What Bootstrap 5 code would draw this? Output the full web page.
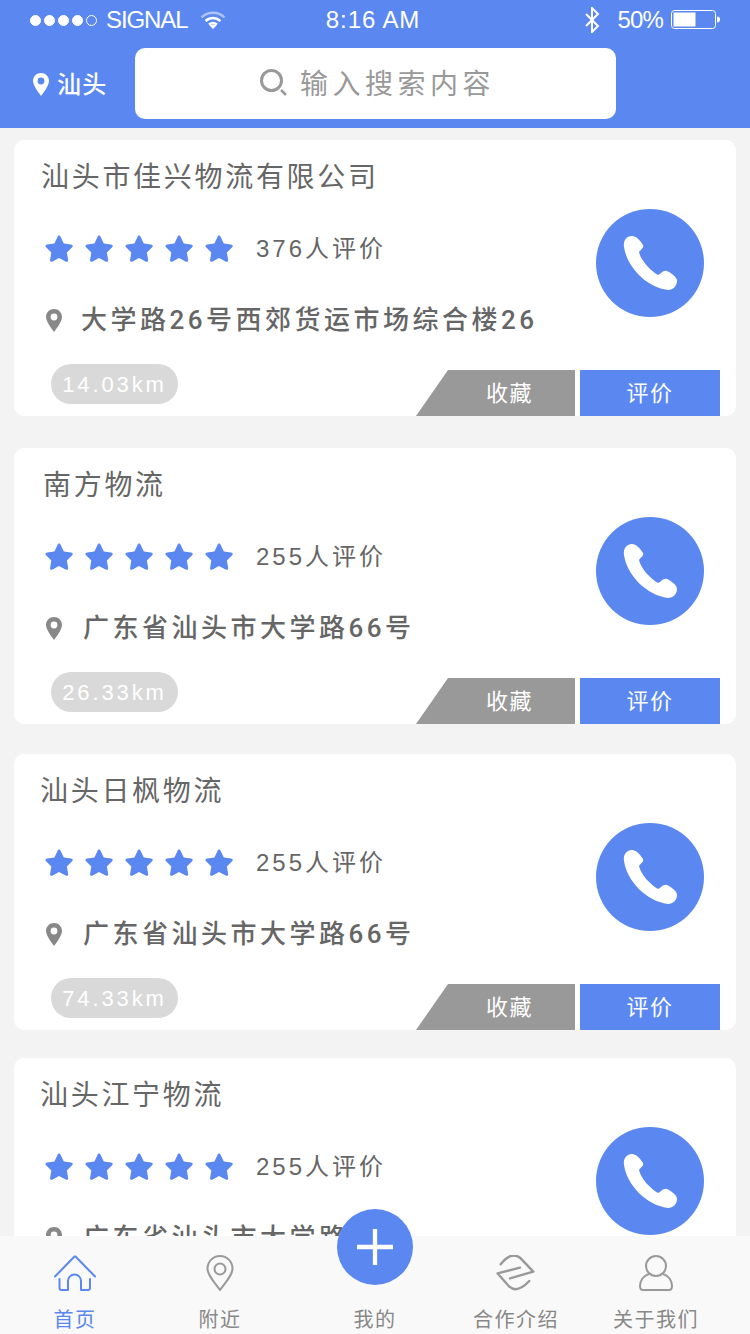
<!DOCTYPE html>
<html lang="zh-CN">

<head>
  <meta charset="UTF-8">
  <title>物流列表</title>
  <meta name="viewport" content="width=device-width, initial-scale=1.0">
  <link href="https://cdn.jsdelivr.net/npm/bootstrap@5.3.0/dist/css/bootstrap.min.css" rel="stylesheet">
  <style>
    body {
      background: #f3f3f3;
      font-family: "Liberation Sans", "Noto Sans CJK SC", sans-serif;
      color: #666;
    }

    .app-screen { width: 750px; height: 1334px; overflow: hidden; position: relative; }

    /* header */
    .top-head { height: 128px; background: #5a88f0; color: #fff; }
    .status-row { height: 40px; padding: 0 30px; font-size: 24px; line-height: 40px; }
    .status-side { flex: 1 1 0; }
    .signal-text { letter-spacing: -1.1px; margin: 0 13px 0 6px; }
    .clock-text { letter-spacing: .9px; margin-right: 4px; }
    .dot-on, .dot-off { width: 11px; height: 11px; border-radius: 50%; border: 1px solid #fff; margin-right: 3px; }
    .dot-on { background: #fff; }
    .bat-text { letter-spacing: -.8px; margin: 0 8px 0 17px; }
    .city-wrap { width: 135px; padding-left: 33px; font-size: 24px; font-weight: 500; letter-spacing: 1.200px; }
    .city-wrap svg { margin-right: 8px; }
    .city-wrap span { margin-top: 2px; }
    .search-box { width: 481px; height: 71px; margin-top: 8px; border-radius: 10px; background: #fff; color: #999; font-size: 28px; letter-spacing: 4.500px; padding-left: 125px; }
    .search-box svg { margin-right: 12px; margin-top: -2px; }
    .search-box span { margin-top: 3px; }
    .head-search { height: 88px; }

    /* cards */
    .firm-card { height: 276px; margin: 0 14px 30px; border-radius: 10px; }
    .firm-card:first-of-type { margin-top: 12px; }
    .gap-wide { margin-bottom: 32px; }
    .gap-tight { margin-bottom: 28px; }
    .card-top { height: 224px; }
    .firm-title { margin: 18px 0 0 27px; height: 40px; line-height: 40px; font-size: 28px; letter-spacing: 2.700px; }
    .title-b { margin-left: 29px; }
    .title-c { margin-left: 26px; }
    .rate-row { margin: 31px 0 0 31px; height: 40px; }
    .rate-row svg { margin: -2px 12px 0 0; flex: none; }
    .rate-text { margin-left: 11px; font-size: 24px; letter-spacing: 3px; }
    .addr-row { margin: 31px 0 0 32px; height: 40px; font-family: Roboto, "Noto Sans CJK SC", sans-serif; font-size: 26px; font-weight: 500; letter-spacing: 3.500px; white-space: nowrap; }
    .addr-row svg { margin-right: 19px; flex: none; }
    .addr-b svg { margin-right: 21px; }
    .call-btn { width: 108px; height: 108px; margin: 69px 32px 0 0; flex: none; }
    .dist-pill { width: 127px; height: 40px; margin-left: 37px; background: #d9d9d9; color: #fff; font-size: 22px; letter-spacing: 2.900px; }
    .act-btns { margin: 6px 16px 0 0; color: #fff; font-size: 22px; letter-spacing: 1.5px; }
    .act-save { width: 159px; height: 46px; background: #999; clip-path: polygon(32px 0, 100% 0, 100% 100%, 0 100%); padding-left: 70px; margin-right: 5px; }
    .act-rate { width: 140px; height: 46px; background: #5a88f0; }

    /* bottom tabs */
    .tab-bar { left: 0; right: 0; bottom: 0; height: 98px; background: #f9f9f9; display: grid; grid-template-columns: 150px 140px 170px 112px 168px; font-size: 20px; letter-spacing: 1.5px; }
    .tab-item { padding-top: 19px; color: #888; }
    .tab-item svg { height: 36px; display: block; flex: none; }
    .tab-item span { margin-top: 15px; line-height: 28px; white-space: nowrap; }
    .tab-on { color: #5a88f0; }
    .tab-mine span { margin-top: 51px; }
    .plus-btn { width: 76px; height: 76px; left: 47px; top: -27px; background: #5a88f0; }
  </style>
</head>

<body>
  <svg width="0" height="0" class="position-absolute">
    <symbol id="i-star" viewBox="0 0 28 27">
      <path fill="#5a88f0" d="M14 0.5c.7 0 1.2.5 1.6 1.3l3.2 6.6 7.2 1c1.6.3 2.3 1.7 1.1 2.9l-5.2 5.1 1.2 7.3c.3 1.7-1.1 2.6-2.5 1.8L14 22.9l-6.4 3.6c-1.4.8-2.8-.1-2.5-1.8l1.2-7.3-5.2-5.1c-1.2-1.2-.5-2.6 1.1-2.9l7.2-1 3.2-6.6C12.8 1 13.3.5 14 .5z"/>
    </symbol>
    <symbol id="i-pin" viewBox="0 0 16 23">
      <path fill-rule="evenodd" d="M8 0C3.6 0 0 3.5 0 8c0 5 8 15 8 15s8-10 8-15c0-4.5-3.6-8-8-8zm0 4.6a3.4 3.4 0 1 1 0 6.8 3.4 3.4 0 0 1 0-6.8z"/>
    </symbol>
    <symbol id="i-call" viewBox="0 0 108 108">
      <circle cx="54" cy="54" r="54" fill="#5a88f0"/>
      <path fill="#fff" d="M28 38C27 31 31 27 36 27C40 27 44 31 47 36C48 39 45 40 43 43C45 52 55 62 62 66C65 65 67 61 71 62C75 64 81 68 81 72C81 77 77 81 72 81C50 78 31 58 28 38Z"/>
    </symbol>
  </svg>

  <div class="app-screen">
    <header class="top-head">
      <div class="status-row d-flex align-items-center">
        <div class="status-side d-flex align-items-center">
          <i class="dot-on"></i><i class="dot-on"></i><i class="dot-on"></i><i class="dot-on"></i><i class="dot-off"></i>
          <span class="signal-text">SIGNAL</span>
          <svg width="26" height="18" viewBox="0 0 26 18" fill="none" stroke="#fff" stroke-width="2.4">
            <path d="M1.5 6.5C8 .2 18 .2 24.500 6.500" opacity=".5"/>
            <path d="M5.500 10C10 6 16 6 20.500 10"/>
            <path d="M9 13.500C11.500 11.500 14.500 11.500 17 13.500"/>
            <path d="M13 18l-3.500-3.500c2-1.500 5-1.500 7 0z" fill="#fff" stroke="none"/>
          </svg>
        </div>
        <span class="clock-text">8:16 AM</span>
        <div class="status-side d-flex align-items-center justify-content-end">
          <svg width="15" height="26" viewBox="0 0 15 26" fill="none" stroke="#fff" stroke-width="2">
            <path d="M1 7l12 12-6 6V1l6 6L1 19"/>
          </svg>
          <span class="bat-text">50%</span>
          <svg width="49" height="20" viewBox="0 0 49 20">
            <rect x=".5" y=".5" width="44" height="18" rx="3" fill="none" stroke="#fff"/>
            <rect x="2.500" y="2.500" width="22" height="14" fill="#fff"/>
            <path d="M46 6.500c2 0 3 1 3 3s-1 3-3 3z" fill="#fff"/>
          </svg>
        </div>
      </div>
      <div class="head-search d-flex">
        <div class="city-wrap d-flex align-items-center">
          <svg width="16" height="23" fill="#fff"><use href="#i-pin"/></svg>
          <span>汕头</span>
        </div>
        <div class="search-box d-flex align-items-center">
          <svg width="28" height="28" viewBox="0 0 28 28" fill="none" stroke="#999" stroke-width="3">
            <circle cx="11.500" cy="11.500" r="10"/>
            <path d="M21 21l5 5" stroke-width="2.500"/>
          </svg>
          <span>输入搜索内容</span>
        </div>
      </div>
    </header>

    <main>
      <section class="card border-0 firm-card gap-wide">
        <div class="card-top d-flex justify-content-between">
          <div>
            <div class="firm-title">汕头市佳兴物流有限公司</div>
            <div class="rate-row d-flex align-items-center">
              <svg width="28" height="27"><use href="#i-star"/></svg><svg width="28" height="27"><use href="#i-star"/></svg><svg width="28" height="27"><use href="#i-star"/></svg><svg width="28" height="27"><use href="#i-star"/></svg><svg width="28" height="27"><use href="#i-star"/></svg>
              <span class="rate-text">376人评价</span>
            </div>
            <div class="addr-row d-flex align-items-center">
              <svg width="16" height="23" fill="#888"><use href="#i-pin"/></svg>
              <span>大学路26号西郊货运市场综合楼26</span>
            </div>
          </div>
          <svg class="call-btn"><use href="#i-call"/></svg>
        </div>
        <div class="d-flex justify-content-between">
          <div class="dist-pill rounded-pill d-flex align-items-center justify-content-center">14.03km</div>
          <div class="act-btns d-flex">
            <div class="act-save d-flex align-items-center">收藏</div>
            <div class="act-rate d-flex align-items-center justify-content-center">评价</div>
          </div>
        </div>
      </section>

      <section class="card border-0 firm-card">
        <div class="card-top d-flex justify-content-between">
          <div>
            <div class="firm-title title-b">南方物流</div>
            <div class="rate-row d-flex align-items-center">
              <svg width="28" height="27"><use href="#i-star"/></svg><svg width="28" height="27"><use href="#i-star"/></svg><svg width="28" height="27"><use href="#i-star"/></svg><svg width="28" height="27"><use href="#i-star"/></svg><svg width="28" height="27"><use href="#i-star"/></svg>
              <span class="rate-text">255人评价</span>
            </div>
            <div class="addr-row addr-b d-flex align-items-center">
              <svg width="16" height="23" fill="#888"><use href="#i-pin"/></svg>
              <span>广东省汕头市大学路66号</span>
            </div>
          </div>
          <svg class="call-btn"><use href="#i-call"/></svg>
        </div>
        <div class="d-flex justify-content-between">
          <div class="dist-pill rounded-pill d-flex align-items-center justify-content-center">26.33km</div>
          <div class="act-btns d-flex">
            <div class="act-save d-flex align-items-center">收藏</div>
            <div class="act-rate d-flex align-items-center justify-content-center">评价</div>
          </div>
        </div>
      </section>

      <section class="card border-0 firm-card gap-tight">
        <div class="card-top d-flex justify-content-between">
          <div>
            <div class="firm-title title-c">汕头日枫物流</div>
            <div class="rate-row d-flex align-items-center">
              <svg width="28" height="27"><use href="#i-star"/></svg><svg width="28" height="27"><use href="#i-star"/></svg><svg width="28" height="27"><use href="#i-star"/></svg><svg width="28" height="27"><use href="#i-star"/></svg><svg width="28" height="27"><use href="#i-star"/></svg>
              <span class="rate-text">255人评价</span>
            </div>
            <div class="addr-row addr-b d-flex align-items-center">
              <svg width="16" height="23" fill="#888"><use href="#i-pin"/></svg>
              <span>广东省汕头市大学路66号</span>
            </div>
          </div>
          <svg class="call-btn"><use href="#i-call"/></svg>
        </div>
        <div class="d-flex justify-content-between">
          <div class="dist-pill rounded-pill d-flex align-items-center justify-content-center">74.33km</div>
          <div class="act-btns d-flex">
            <div class="act-save d-flex align-items-center">收藏</div>
            <div class="act-rate d-flex align-items-center justify-content-center">评价</div>
          </div>
        </div>
      </section>

      <section class="card border-0 firm-card">
        <div class="card-top d-flex justify-content-between">
          <div>
            <div class="firm-title title-c">汕头江宁物流</div>
            <div class="rate-row d-flex align-items-center">
              <svg width="28" height="27"><use href="#i-star"/></svg><svg width="28" height="27"><use href="#i-star"/></svg><svg width="28" height="27"><use href="#i-star"/></svg><svg width="28" height="27"><use href="#i-star"/></svg><svg width="28" height="27"><use href="#i-star"/></svg>
              <span class="rate-text">255人评价</span>
            </div>
            <div class="addr-row addr-b d-flex align-items-center">
              <svg width="16" height="23" fill="#888"><use href="#i-pin"/></svg>
              <span>广东省汕头市大学路66号</span>
            </div>
          </div>
          <svg class="call-btn"><use href="#i-call"/></svg>
        </div>
      </section>
    </main>

    <nav class="tab-bar position-absolute">
      <a class="tab-item tab-on d-flex flex-column align-items-center text-decoration-none">
        <svg width="42" viewBox="0 0 42 36" fill="none" stroke="#5a88f0" stroke-width="2" stroke-linejoin="round" stroke-linecap="round">
          <path d="M1 21.500L20.500 1.500a1 1 0 0 1 1 0L41 21.500"/>
          <path d="M5.500 24v9a2 2 0 0 0 2 2H14V26a6.500 6.500 0 0 1 13 0v9h7a2 2 0 0 0 2-2v-9"/>
        </svg>
        <span>首页</span>
      </a>
      <a class="tab-item d-flex flex-column align-items-center text-decoration-none">
        <svg width="28" viewBox="0 0 28 36" fill="none" stroke="#999" stroke-width="2">
          <path d="M14 35C8 27 1.500 20 1.500 13.500a12.500 12.500 0 0 1 25 0C26.500 20 20 27 14 35z"/>
          <circle cx="14" cy="14" r="5.500"/>
        </svg>
        <span>附近</span>
      </a>
      <a class="tab-item tab-mine d-flex flex-column align-items-center text-decoration-none position-relative">
        <span>我的</span>
        <div class="plus-btn rounded-circle position-absolute d-flex align-items-center justify-content-center">
          <svg width="42" height="42" viewBox="0 0 42 42" stroke="#fff" stroke-width="5"><path d="M21 0v42M0 21h42"/></svg>
        </div>
      </a>
      <a class="tab-item d-flex flex-column align-items-center text-decoration-none">
        <svg width="40" viewBox="0 0 40 36" fill="none" stroke="#999" stroke-width="2.400" stroke-linejoin="round" stroke-linecap="round">
          <path d="M4.700 9.300C12.300-.7 19-.7 24 2.700L37.300 16.700 14 23.300"/>
          <path d="M24 12.700L1.500 18.300 13.300 31.700C19 36.700 25.700 34 33.300 26"/>
        </svg>
        <span>合作介绍</span>
      </a>
      <a class="tab-item d-flex flex-column align-items-center text-decoration-none">
        <svg width="34" viewBox="0 0 34 36" fill="none" stroke="#999" stroke-width="2">
          <circle cx="17" cy="11" r="10"/>
          <path d="M10 19C4 21 1 26 1 31c0 2 1 4 3 4h26c2 0 3-2 3-4 0-5-3-10-9-12"/>
        </svg>
        <span>关于我们</span>
      </a>
    </nav>
  </div>

  <script src="https://cdn.jsdelivr.net/npm/bootstrap@5.3.0/dist/js/bootstrap.bundle.min.js"></script>
</body>
</html>
